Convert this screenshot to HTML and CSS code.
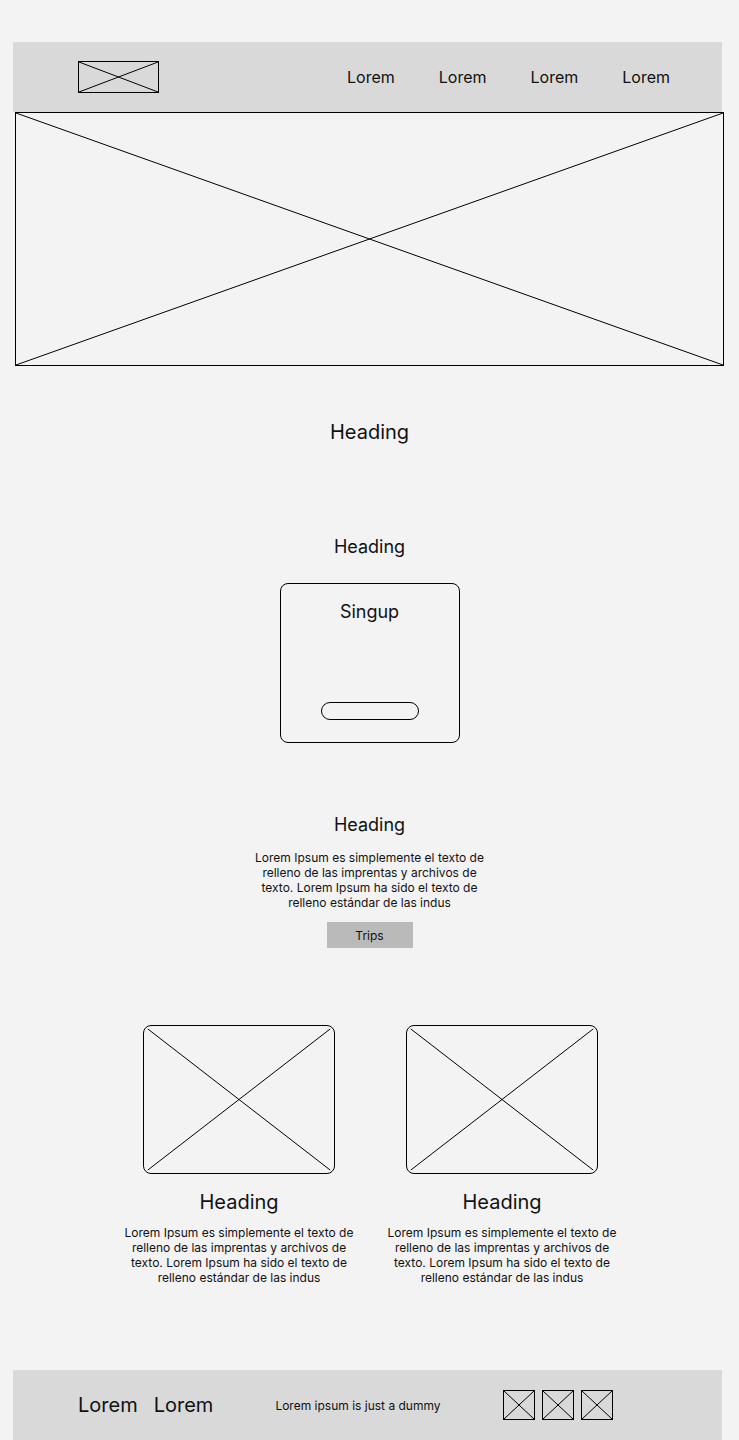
FILE: index.html
```html
<!DOCTYPE html>
<html lang="es">
<head>
<meta charset="utf-8">
<title>Wireframe</title>
<link rel="stylesheet" href="styles.css">
</head>
<body>
<div class="page">
  <header class="topbar">
    <div class="logo ph">
      <svg viewBox="0 0 100 100" preserveAspectRatio="none"><line x1="0" y1="0" x2="100" y2="100"/><line x1="100" y1="0" x2="0" y2="100"/></svg>
    </div>
    <nav class="nav">
      <a>Lorem</a><a>Lorem</a><a>Lorem</a><a>Lorem</a>
    </nav>
  </header>

  <div class="hero ph">
    <svg viewBox="0 0 100 100" preserveAspectRatio="none"><line x1="0" y1="0" x2="100" y2="100"/><line x1="100" y1="0" x2="0" y2="100"/></svg>
  </div>

  <h1 class="h-main">Heading</h1>

  <section class="signup-section">
    <h2 class="h-sub">Heading</h2>
    <div class="signup-card">
      <div class="signup-title">Singup</div>
      <div class="pill"></div>
    </div>
  </section>

  <section class="intro">
    <h2 class="h-sub">Heading</h2>
    <p class="para">Lorem Ipsum es simplemente el texto de relleno de las imprentas y archivos de texto. Lorem Ipsum ha sido el texto de relleno estándar de las indus</p>
    <button class="trips">Trips</button>
  </section>

  <section class="cards">
    <div class="card">
      <div class="card-img ph">
        <svg viewBox="0 0 100 100" preserveAspectRatio="none"><line x1="2" y1="2" x2="98" y2="98"/><line x1="98" y1="2" x2="2" y2="98"/></svg>
      </div>
      <h3 class="card-h">Heading</h3>
      <p class="para">Lorem Ipsum es simplemente el texto de relleno de las imprentas y archivos de texto. Lorem Ipsum ha sido el texto de relleno estándar de las indus</p>
    </div>
    <div class="card">
      <div class="card-img ph">
        <svg viewBox="0 0 100 100" preserveAspectRatio="none"><line x1="2" y1="2" x2="98" y2="98"/><line x1="98" y1="2" x2="2" y2="98"/></svg>
      </div>
      <h3 class="card-h">Heading</h3>
      <p class="para">Lorem Ipsum es simplemente el texto de relleno de las imprentas y archivos de texto. Lorem Ipsum ha sido el texto de relleno estándar de las indus</p>
    </div>
  </section>

  <footer class="footer">
    <div class="foot-links"><span>Lorem</span><span>Lorem</span></div>
    <div class="foot-text">Lorem ipsum is just a dummy</div>
    <div class="foot-icons">
      <div class="ficon ph"><svg viewBox="0 0 100 100" preserveAspectRatio="none"><line x1="0" y1="0" x2="100" y2="100"/><line x1="100" y1="0" x2="0" y2="100"/></svg></div>
      <div class="ficon ph"><svg viewBox="0 0 100 100" preserveAspectRatio="none"><line x1="0" y1="0" x2="100" y2="100"/><line x1="100" y1="0" x2="0" y2="100"/></svg></div>
      <div class="ficon ph"><svg viewBox="0 0 100 100" preserveAspectRatio="none"><line x1="0" y1="0" x2="100" y2="100"/><line x1="100" y1="0" x2="0" y2="100"/></svg></div>
    </div>
  </footer>
</div>
</body>
</html>
```

FILE: styles.css
```css
* { box-sizing: border-box; }
html, body { margin: 0; padding: 0; background: #f3f3f3; }
body {
  font-family: Inter, "Noto Sans", "Liberation Sans", sans-serif;
  color: #111;
  width: 739px;
  overflow: hidden;
}
.page {
  padding: 42px 0 0 0;
  display: flex;
  flex-direction: column;
}
.ph { border: 1px solid #000; position: relative; overflow: hidden; }
.ph svg { display: block; width: 100%; height: 100%; }
.ph line { stroke: #000; stroke-width: 1; vector-effect: non-scaling-stroke; }

.topbar {
  margin: 0 17px 0 13px;
  height: 70px;
  background: #d9d9d9;
  display: flex;
  align-items: center;
  padding: 0 52px 0 65px;
  justify-content: space-between;
}
.logo { width: 81px; height: 32px; margin-top: -1px; }
.nav { display: flex; gap: 44px; }
.nav a { font-size: 16px; color: #111; }

.hero { margin: 0 15px 0 15px; height: 254px; }

.h-main {
  margin: 54px 0 0;
  font-size: 20px;
  font-weight: 400;
  line-height: 24px;
  text-align: center;
}
.h-sub {
  margin: 0;
  font-size: 18px;
  font-weight: 400;
  line-height: 22px;
  text-align: center;
}
.signup-section {
  margin-top: 92px;
  display: flex;
  flex-direction: column;
  align-items: center;
}
.signup-card {
  margin-top: 25px;
  width: 180px;
  height: 160px;
  border: 1px solid #000;
  border-radius: 8px;
  display: flex;
  flex-direction: column;
  align-items: center;
  padding-top: 17px;
}
.signup-title { font-size: 18px; line-height: 22px; }
.pill {
  margin-top: 79px;
  width: 98px;
  height: 18px;
  border: 1px solid #000;
  border-radius: 9px;
}

.intro {
  margin-top: 71px;
  display: flex;
  flex-direction: column;
  align-items: center;
}
.para {
  margin: 0;
  width: 234px;
  font-size: 12px;
  line-height: 15px;
  text-align: center;
  color: #111;
}
.intro .para { margin-top: 14px; }
.trips {
  margin-top: 12px;
  width: 86px;
  height: 26px;
  border: 0;
  background: #bababa;
  font-family: inherit;
  font-size: 12px;
  color: #111;
  padding: 0;
}

.cards {
  margin-top: 77px;
  display: flex;
  justify-content: center;
  gap: 29px;
  padding-left: 2px;
}
.card {
  width: 234px;
  display: flex;
  flex-direction: column;
  align-items: center;
}
.card-img {
  width: 192px;
  height: 149px;
  border-radius: 8px;
}
.card-h {
  margin: 16px 0 0;
  font-size: 20px;
  font-weight: 400;
  line-height: 24px;
  text-align: center;
}
.card .para { margin-top: 11px; }

.footer {
  margin: 85px 17px 0 13px;
  height: 70px;
  background: #d9d9d9;
  display: flex;
  align-items: center;
  padding-left: 65px;
}
.foot-links { display: flex; gap: 16px; font-size: 20px; }
.foot-text { margin-left: 62px; font-size: 12px; }
.foot-icons { margin-left: 62px; display: flex; gap: 7px; margin-top: -1px; }
.ficon { width: 32px; height: 30px; }
```
